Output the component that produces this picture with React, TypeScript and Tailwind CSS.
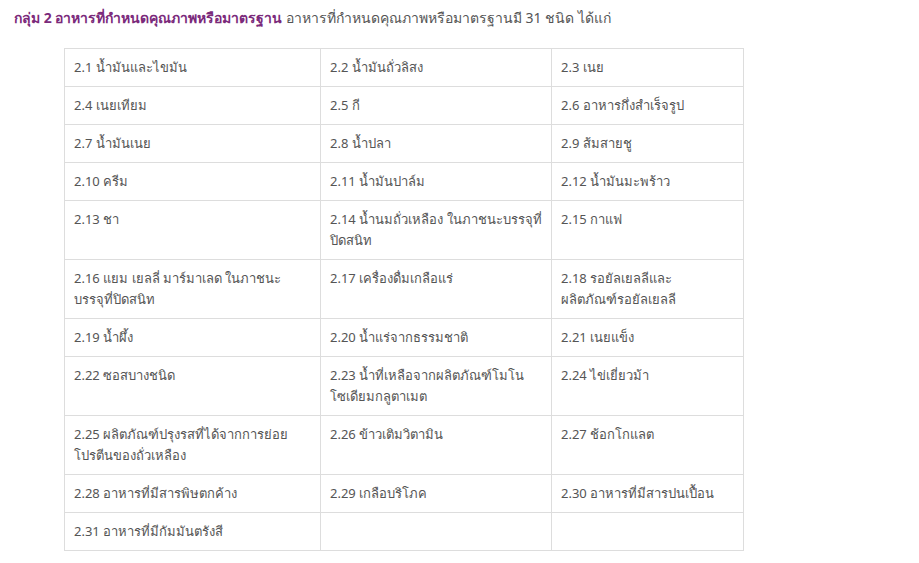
const rows: string[][] = [
  ["2.1 น้ำมันและไขมัน", "2.2 น้ำมันถั่วลิสง", "2.3 เนย"],
  ["2.4 เนยเทียม", "2.5 กี", "2.6 อาหารกึ่งสำเร็จรูป"],
  ["2.7 น้ำมันเนย", "2.8 น้ำปลา", "2.9 ส้มสายชู"],
  ["2.10 ครีม", "2.11 น้ำมันปาล์ม", "2.12 น้ำมันมะพร้าว"],
  ["2.13 ชา", "2.14 น้ำนมถั่วเหลือง ในภาชนะบรรจุที่|ปิดสนิท", "2.15 กาแฟ"],
  ["2.16 แยม เยลลี่ มาร์มาเลด ในภาชนะ|บรรจุที่ปิดสนิท", "2.17 เครื่องดื่มเกลือแร่", "2.18 รอยัลเยลลีและ|ผลิตภัณฑ์รอยัลเยลลี"],
  ["2.19 น้ำผึ้ง", "2.20 น้ำแร่จากธรรมชาติ", "2.21 เนยแข็ง"],
  ["2.22 ซอสบางชนิด", "2.23 น้ำที่เหลือจากผลิตภัณฑ์โมโน|โซเดียมกลูตาเมต", "2.24 ไข่เยี่ยวม้า"],
  ["2.25 ผลิตภัณฑ์ปรุงรสที่ได้จากการย่อย|โปรตีนของถั่วเหลือง", "2.26 ข้าวเติมวิตามิน", "2.27 ช้อกโกแลต"],
  ["2.28 อาหารที่มีสารพิษตกค้าง", "2.29 เกลือบริโภค", "2.30 อาหารที่มีสารปนเปื้อน"],
  ["2.31 อาหารที่มีกัมมันตรังสี", "", ""],
];

const widths = ["w-[256px]", "w-[231px]", "w-[192px]"];

export default function App() {
  return (
    <div
      className="bg-white min-h-[563px] text-[13px] text-[#555555]"
      style={{ fontFamily: "Tahoma, 'Noto Sans', 'DejaVu Sans', sans-serif" }}
    >
      <p className="pl-[14px] pt-[7px] leading-[21px] text-[14px]">
        <strong className="font-bold text-[#7b2a7b]">กลุ่ม 2 อาหารที่กำหนดคุณภาพหรือมาตรฐาน</strong>{" "}
        อาหารที่กำหนดคุณภาพหรือมาตรฐานมี 31 ชนิด ได้แก่
      </p>
      <table className="ml-[64px] mt-[20px] border-collapse table-fixed w-[680px]">
        <tbody>
          {rows.map((row, i) => (
            <tr key={i}>
              {row.map((cell, j) => (
                <td
                  key={j}
                  className={`${widths[j]} border border-[#dddddd] px-[9px] pt-[8px] pb-[8px] align-top leading-[21px]`}
                >
                  {cell.split("|").map((line, k) => (
                    <span key={k}>
                      {k > 0 && <br />}
                      {line}
                    </span>
                  ))}
                </td>
              ))}
            </tr>
          ))}
        </tbody>
      </table>
    </div>
  );
}
